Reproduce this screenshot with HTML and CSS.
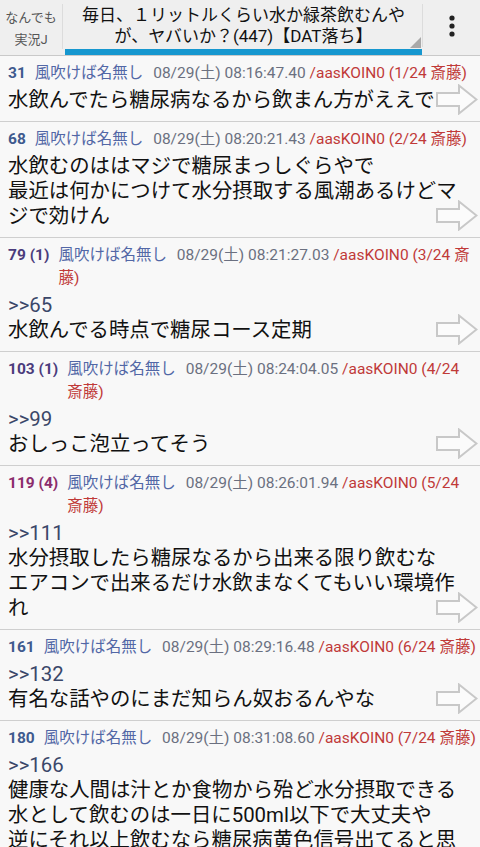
FILE: index.html
```html
<!DOCTYPE html>
<html lang="ja">
<head>
<meta charset="utf-8">
<title>スレッド</title>
<link rel="stylesheet" href="styles.css">
</head>
<body>
<header class="bar">
  <div class="board">なんでも<br>実況J</div>
  <div class="title">
    <div class="title-text">毎日、１リットルくらい水か緑茶飲むんや<br>が、ヤバいか？(447)【DAT落ち】</div>
    <span class="corner"></span>
  </div>
  <div class="menu">
    <svg width="8" height="24" viewBox="0 0 8 24"><circle cx="4" cy="4" r="2.6" fill="#222"/><circle cx="4" cy="12" r="2.6" fill="#222"/><circle cx="4" cy="20" r="2.6" fill="#222"/></svg>
  </div>
</header>

<main class="list">
  <article class="post">
    <div class="meta"><span class="num c-blue">31</span><span class="info"><span class="name">風吹けば名無し</span> <span class="date">08/29(土) 08:16:47.40</span> <span class="id">/aasKOIN0 (1/24 斎藤)</span></span></div>
    <div class="body">水飲んでたら糖尿病なるから飲まん方がええで</div>
    <svg class="arrow" viewBox="0 0 42 31"><path d="M1 9 H23 V1.5 L40.5 15.5 L23 29.5 V22 H1 Z"/></svg>
  </article>

  <article class="post">
    <div class="meta"><span class="num c-blue">68</span><span class="info"><span class="name">風吹けば名無し</span> <span class="date">08/29(土) 08:20:21.43</span> <span class="id">/aasKOIN0 (2/24 斎藤)</span></span></div>
    <div class="body">水飲むのははマジで糖尿まっしぐらやで<br>最近は何かにつけて水分摂取する風潮あるけどマジで効けん</div>
    <svg class="arrow" viewBox="0 0 42 31"><path d="M1 9 H23 V1.5 L40.5 15.5 L23 29.5 V22 H1 Z"/></svg>
  </article>

  <article class="post">
    <div class="meta"><span class="num c-purple">79 (1)</span><span class="info"><span class="name">風吹けば名無し</span> <span class="date">08/29(土) 08:21:27.03</span> <span class="id">/aasKOIN0 (3/24 斎藤)</span></span></div>
    <div class="body"><span class="anchor">&gt;&gt;65</span><br>水飲んでる時点で糖尿コース定期</div>
    <svg class="arrow" viewBox="0 0 42 31"><path d="M1 9 H23 V1.5 L40.5 15.5 L23 29.5 V22 H1 Z"/></svg>
  </article>

  <article class="post">
    <div class="meta"><span class="num c-purple">103 (1)</span><span class="info"><span class="name">風吹けば名無し</span> <span class="date">08/29(土) 08:24:04.05</span> <span class="id">/aasKOIN0 (4/24 斎藤)</span></span></div>
    <div class="body"><span class="anchor">&gt;&gt;99</span><br>おしっこ泡立ってそう</div>
    <svg class="arrow" viewBox="0 0 42 31"><path d="M1 9 H23 V1.5 L40.5 15.5 L23 29.5 V22 H1 Z"/></svg>
  </article>

  <article class="post">
    <div class="meta"><span class="num c-magenta">119 (4)</span><span class="info"><span class="name">風吹けば名無し</span> <span class="date">08/29(土) 08:26:01.94</span> <span class="id">/aasKOIN0 (5/24 斎藤)</span></span></div>
    <div class="body"><span class="anchor">&gt;&gt;111</span><br>水分摂取したら糖尿なるから出来る限り飲むな<br>エアコンで出来るだけ水飲まなくてもいい環境作れ</div>
    <svg class="arrow" viewBox="0 0 42 31"><path d="M1 9 H23 V1.5 L40.5 15.5 L23 29.5 V22 H1 Z"/></svg>
  </article>

  <article class="post">
    <div class="meta"><span class="num c-blue">161</span><span class="info"><span class="name">風吹けば名無し</span> <span class="date">08/29(土) 08:29:16.48</span> <span class="id">/aasKOIN0 (6/24 斎藤)</span></span></div>
    <div class="body"><span class="anchor">&gt;&gt;132</span><br>有名な話やのにまだ知らん奴おるんやな</div>
    <svg class="arrow" viewBox="0 0 42 31"><path d="M1 9 H23 V1.5 L40.5 15.5 L23 29.5 V22 H1 Z"/></svg>
  </article>

  <article class="post">
    <div class="meta"><span class="num c-blue">180</span><span class="info"><span class="name">風吹けば名無し</span> <span class="date">08/29(土) 08:31:08.60</span> <span class="id">/aasKOIN0 (7/24 斎藤)</span></span></div>
    <div class="body"><span class="anchor">&gt;&gt;166</span><br>健康な人間は汁とか食物から殆ど水分摂取できる<br>水として飲むのは一日に500ml以下で大丈夫や<br>逆にそれ以上飲むなら糖尿病黄色信号出てると思うで</div>
    <svg class="arrow" viewBox="0 0 42 31"><path d="M1 9 H23 V1.5 L40.5 15.5 L23 29.5 V22 H1 Z"/></svg>
  </article>
</main>
</body>
</html>
```

FILE: styles.css
```css
html, body {
  margin: 0;
  padding: 0;
}
body {
  width: 480px;
  background: #f8f8f8;
  font-family: Roboto, "Noto Sans CJK JP", sans-serif;
  color: #111;
  overflow: hidden;
}

.bar {
  display: flex;
  height: 56px;
  background: #efefef;
  border-bottom: 1px solid #c9c9c9;
  box-sizing: border-box;
}
.board {
  width: 63px;
  flex: none;
  box-sizing: border-box;
  border-right: 1px solid #dcdcdc;
  margin: 4px 0 6px;
  text-align: center;
  font-size: 13px;
  line-height: 22px;
  color: #555;
  padding-top: 3px;
}
.title {
  position: relative;
  flex: 1;
  margin-left: 2px;
  border-bottom: 6px solid #1697cf;
  display: flex;
  align-items: center;
  justify-content: center;
}
.title-text {
  text-align: center;
  font-size: 17px;
  line-height: 21px;
  color: #111;
  margin-top: 2px;
}
.corner {
  position: absolute;
  right: 1px;
  bottom: 1px;
  width: 0;
  height: 0;
  border-left: 11px solid transparent;
  border-bottom: 11px solid #a9a9a9;
}
.menu {
  width: 58px;
  flex: none;
  box-sizing: border-box;
  border-left: 1px solid #dcdcdc;
  margin: 4px 0 8px;
  display: flex;
  align-items: center;
  justify-content: center;
}

.post {
  position: relative;
  padding: 6px 4px 8px 8px;
  border-bottom: 1px solid #cfcfcf;
}
.meta {
  display: flex;
  column-gap: 9px;
  font-size: 15.5px;
  line-height: 23px;
}
.num {
  flex: none;
  font-weight: 700;
}
.c-blue { color: #3e5a8e; }
.c-purple { color: #4b3c7c; }
.c-magenta { color: #8b2c6c; }
.info {
  flex: 1;
  min-width: 0;
}
.name {
  color: #5267a6;
  margin-right: 6px;
}
.date { color: #6b7080; }
.id { color: #c03a38; }

.body {
  margin-top: 3px;
  margin-right: 8px;
  font-size: 20.4px;
  line-height: 25px;
  color: #111;
}
.anchor { color: #3a4769; }

.arrow {
  position: absolute;
  right: 2px;
  bottom: 6px;
  width: 42px;
  height: 31px;
}
.arrow path {
  fill: #fbfbfb;
  stroke: #c8c8c8;
  stroke-width: 2;
  stroke-linejoin: miter;
}
```
